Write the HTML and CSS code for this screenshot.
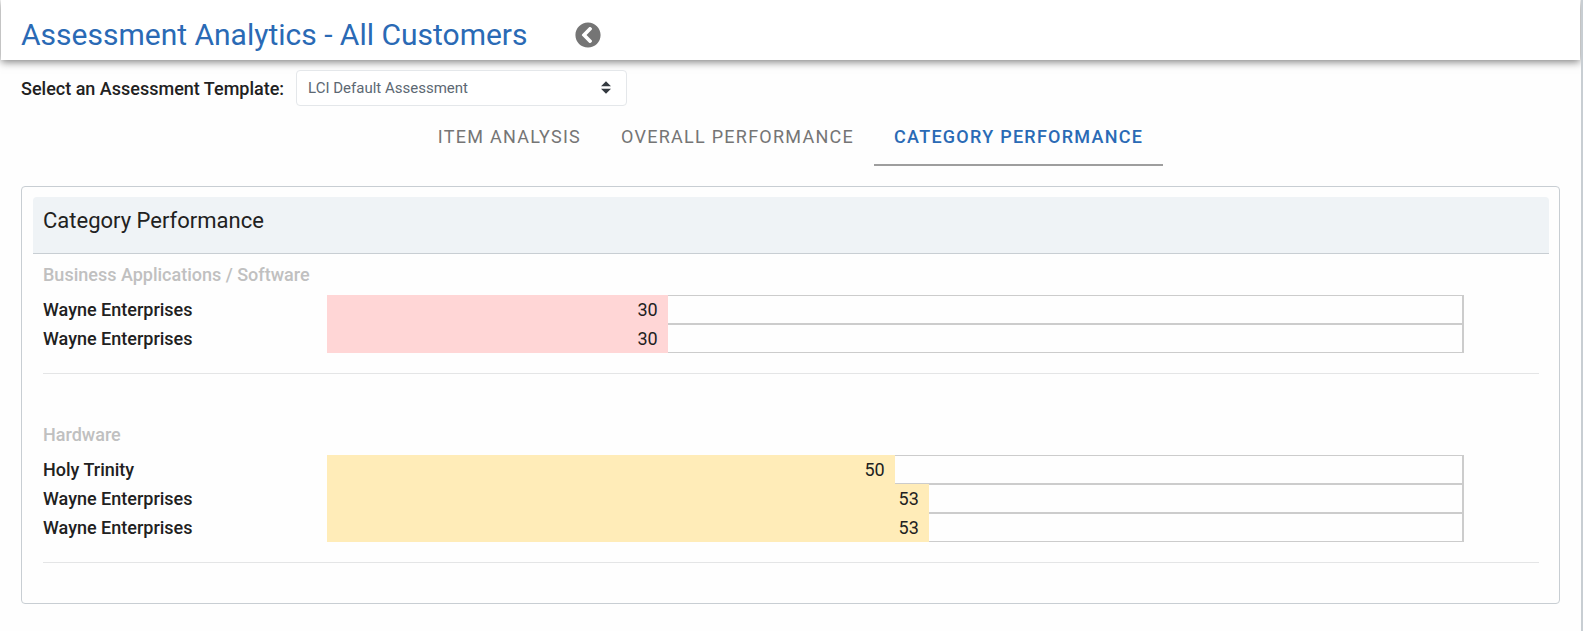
FILE: index.html
```html
<!DOCTYPE html>
<html lang="en">

<head>
    <meta charset="UTF-8">
    <meta name="viewport" content="width=device-width, initial-scale=1.0">
    <title>Assessment Analytics</title>
    <link rel="stylesheet" href="styles.css">
</head>

<body>
    <header class="page-header">
        <h1>Assessment Analytics - All Customers</h1>
        <button type="button" class="back-btn" aria-label="Back">
            <svg viewBox="0 0 512 512" width="26" height="26">
                <path d="M256 504C119 504 8 393 8 256S119 8 256 8s248 111 248 248-111 248-248 248zM142.100 273l135.500 135.500c9.400 9.400 24.600 9.400 33.900 0l17-17c9.400-9.400 9.400-24.600 0-33.900L226.900 256l101.600-101.600c9.400-9.400 9.400-24.600 0-33.900l-17-17c-9.400-9.400-24.600-9.400-33.900 0L142.100 239c-9.400 9.400-9.400 24.600 0 34z" fill="#757575" />
            </svg>
        </button>
    </header>

    <main>
        <div class="template-picker">
            <label for="template">Select an Assessment Template:</label>
            <div class="select-wrap">
                <select id="template">
                    <option>LCI Default Assessment</option>
                </select>
                <svg class="select-arrows" viewBox="0 0 4 5" width="10" height="13">
                    <path d="M2 0L0 2h4zm0 5L0 3h4z" fill="#343a40" />
                </svg>
            </div>
        </div>

        <nav class="tabs">
            <a href="#item">Item Analysis</a>
            <a href="#overall">Overall Performance</a>
            <a href="#category" class="active" aria-current="page">Category Performance</a>
        </nav>

        <section class="card">
            <h2>Category Performance</h2>

            <div class="category">
                <h3>Business Applications / Software</h3>
                <div class="row">
                    <span class="customer">Wayne Enterprises</span>
                    <div class="track"><div class="bar low" style="width: 30%">30</div></div>
                </div>
                <div class="row">
                    <span class="customer">Wayne Enterprises</span>
                    <div class="track"><div class="bar low" style="width: 30%">30</div></div>
                </div>
            </div>

            <div class="category">
                <h3>Hardware</h3>
                <div class="row">
                    <span class="customer">Holy Trinity</span>
                    <div class="track"><div class="bar medium" style="width: 50%">50</div></div>
                </div>
                <div class="row">
                    <span class="customer">Wayne Enterprises</span>
                    <div class="track"><div class="bar medium" style="width: 53%">53</div></div>
                </div>
                <div class="row">
                    <span class="customer">Wayne Enterprises</span>
                    <div class="track"><div class="bar medium" style="width: 53%">53</div></div>
                </div>
            </div>
        </section>
    </main>
</body>

</html>
```
FILE: styles.css
```css
* {
    box-sizing: border-box;
}

body {
    margin: 0;
    min-height: 100vh;
    border-right: 2px solid #c8ced3;
    background-color: #fefefe;
    color: #212121;
    font-family: Roboto, sans-serif;
    font-size: 18px;
    line-height: 27px;
}

h1,
h2,
h3 {
    margin: 0;
}

.page-header {
    display: flex;
    align-items: center;
    gap: 47px;
    height: 60px;
    margin: 0 1px;
    padding: 10px 20px 0;
    background-color: #fff;
    box-shadow: 0 2px 8px rgba(0, 0, 0, 0.5);
}

h1 {
    color: #2a6ab5;
    font-size: 30px;
    font-weight: 400;
    line-height: 36px;
}

.back-btn {
    display: flex;
    padding: 0;
    border: none;
    background: none;
    cursor: pointer;
}

main {
    padding: 10px 21px 26px;
}

.template-picker {
    display: flex;
    align-items: center;
    gap: 12px;
}

.template-picker label {
    font-weight: 500;
}

.select-wrap {
    position: relative;
    width: 331px;
}

select {
    width: 100%;
    height: 36px;
    padding: 0 11px;
    border: 1px solid #e4e7ea;
    border-radius: 4px;
    background-color: #fff;
    color: #5c6873;
    font-family: inherit;
    font-size: 15px;
    appearance: none;
}

.select-arrows {
    position: absolute;
    top: 11px;
    right: 16px;
    pointer-events: none;
}

.tabs {
    display: flex;
    justify-content: center;
    margin-bottom: 20px;
}

.tabs a {
    padding: 17px 20px 14px;
    border-bottom: 2px solid transparent;
    color: #757575;
    letter-spacing: 0.07em;
    text-decoration: none;
    text-transform: uppercase;
}

.tabs a.active {
    border-color: #9e9e9e;
    color: #2a6ab5;
    font-weight: 500;
}

.card {
    padding: 10px 10px 40px 11px;
    border: 1px solid #c8ced3;
    border-radius: 4px;
}

h2 {
    padding: 10px 10px 19px;
    border-bottom: 1px solid #c8ced3;
    border-radius: 4px 4px 0 0;
    background-color: #eff3f6;
    font-size: 22px;
    font-weight: 400;
}

.category {
    margin: 0 10px;
    padding: 7px 0 20px;
    border-bottom: 1px solid #e4e5e6;
}

.category + .category {
    margin-top: 40px;
}

h3 {
    margin-bottom: 7px;
    color: #c0c0c0;
    font-size: 18px;
    font-weight: 500;
}

.row {
    display: flex;
}

.customer {
    width: 19%;
    font-weight: 500;
    line-height: 29px;
}

.track {
    width: 76%;
    border: solid #ccc;
    border-width: 1px 2px 1px 0;
}

/* bars cover the track border */
.bar {
    margin: -1px 0;
    padding-right: 10px;
    line-height: 29px;
    text-align: right;
}

.low {
    background-color: #ffd6d6;
}

.medium {
    background-color: #ffecb8;
}
```
